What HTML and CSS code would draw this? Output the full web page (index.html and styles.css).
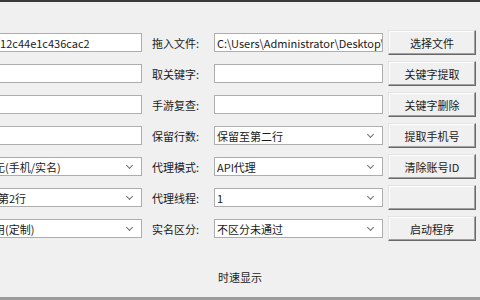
FILE: index.html
```html
<!DOCTYPE html>
<html lang="zh-CN">
<head>
    <meta charset="UTF-8">
    <title>工具</title>
    <link rel="stylesheet" href="styles.css">
</head>
<body>
    <div class="form">
        <div class="field"><span class="field-text">812c44e1c436cac2</span></div>
        <label class="label">拖入文件:</label>
        <div class="field"><span class="field-text">C:\Users\Administrator\Desktop\</span></div>
        <button class="btn">选择文件</button>

        <div class="field"></div>
        <label class="label">取关键字:</label>
        <div class="field"></div>
        <button class="btn">关键字提取</button>

        <div class="field"></div>
        <label class="label">手游复查:</label>
        <div class="field"></div>
        <button class="btn">关键字删除</button>

        <div class="field"></div>
        <label class="label">保留行数:</label>
        <div class="field select"><span class="field-text">保留至第二行</span></div>
        <button class="btn">提取手机号</button>

        <div class="field select"><span class="field-text">无(手机/实名)</span></div>
        <label class="label">代理模式:</label>
        <div class="field select"><span class="field-text">API代理</span></div>
        <button class="btn">清除账号ID</button>

        <div class="field select"><span class="field-text near">第2行</span></div>
        <label class="label">代理线程:</label>
        <div class="field select"><span class="field-text">1</span></div>
        <button class="btn"></button>

        <div class="field select"><span class="field-text">用(定制)</span></div>
        <label class="label">实名区分:</label>
        <div class="field select"><span class="field-text">不区分未通过</span></div>
        <button class="btn">启动程序</button>
    </div>
    <div class="status">时速显示</div>
</body>
</html>
```

FILE: styles.css
```css
html, body {
    height: 100%;
}
body {
    margin: 0;
    background-color: #f0f0f0;
    font-family: "Noto Sans CJK SC", "Noto Sans", sans-serif;
    font-size: 11px;
    color: #1a1a1a;
    border-top: 2px solid #3a3a3a;
    border-bottom: 3px solid #9c9c9c;
    box-sizing: border-box;
    overflow: hidden;
}
.form {
    display: grid;
    grid-template-columns: 151px 72px 169px 93px;
    grid-auto-rows: 25px;
    row-gap: 6px;
    align-items: center;
    margin-left: -9px;
    padding-top: 28px;
}
.field {
    height: 19px;
    box-sizing: border-box;
    background-color: #fff;
    border: 1px solid #adadad;
    display: flex;
    align-items: center;
    overflow: hidden;
    white-space: nowrap;
    position: relative;
}
.field-text {
    padding-left: 2px;
    min-width: 0;
    overflow: hidden;
}
.field-text.near {
    padding-left: 6px;
}
.select::after {
    content: "";
    position: absolute;
    right: 9px;
    top: 5px;
    width: 4px;
    height: 4px;
    border-right: 1px solid #707070;
    border-bottom: 1px solid #707070;
    transform: rotate(45deg);
}
.label {
    padding-left: 10px;
    white-space: nowrap;
}
.btn {
    margin-left: 5px;
    width: 88px;
    height: 25px;
    padding: 0;
    font: inherit;
    color: #1a1a1a;
    background-color: #f0f0f0;
    border: 1px solid;
    border-color: #e3e3e3 #696969 #696969 #e3e3e3;
    box-shadow: inset -1px -1px #a0a0a0, inset 1px 1px #fff;
}
.status {
    margin-top: 28px;
    text-align: center;
}
```
